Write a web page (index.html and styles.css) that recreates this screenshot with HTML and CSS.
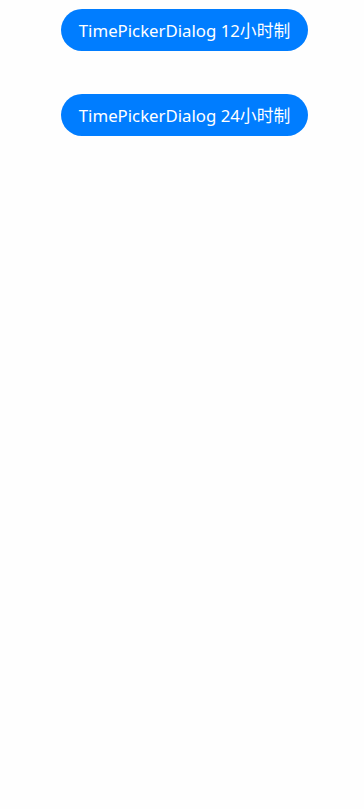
FILE: index.html
```html
<!DOCTYPE html>
<html lang="zh">
<head>
<meta charset="utf-8">
<link rel="stylesheet" href="styles.css">
</head>
<body>
<main class="page">
  <button class="btn">TimePickerDialog 12小时制</button>
  <button class="btn">TimePickerDialog 24小时制</button>
</main>
</body>
</html>
```
FILE: styles.css
```css
html, body {
  margin: 0;
  padding: 0;
  background: #fefefe;
}
.page {
  display: flex;
  flex-direction: column;
  align-items: flex-start;
  gap: 43px;
  padding: 9px 0 0 61px;
  height: 809px;
  box-sizing: border-box;
}
.btn {
  width: 247px;
  height: 42px;
  border: none;
  border-radius: 21px;
  background: #007dff;
  color: #ffffff;
  font-family: "Noto Sans", "Noto Sans CJK SC", sans-serif;
  font-size: 16.8px;
  padding: 0;
  display: flex;
  align-items: center;
  justify-content: center;
}
```
